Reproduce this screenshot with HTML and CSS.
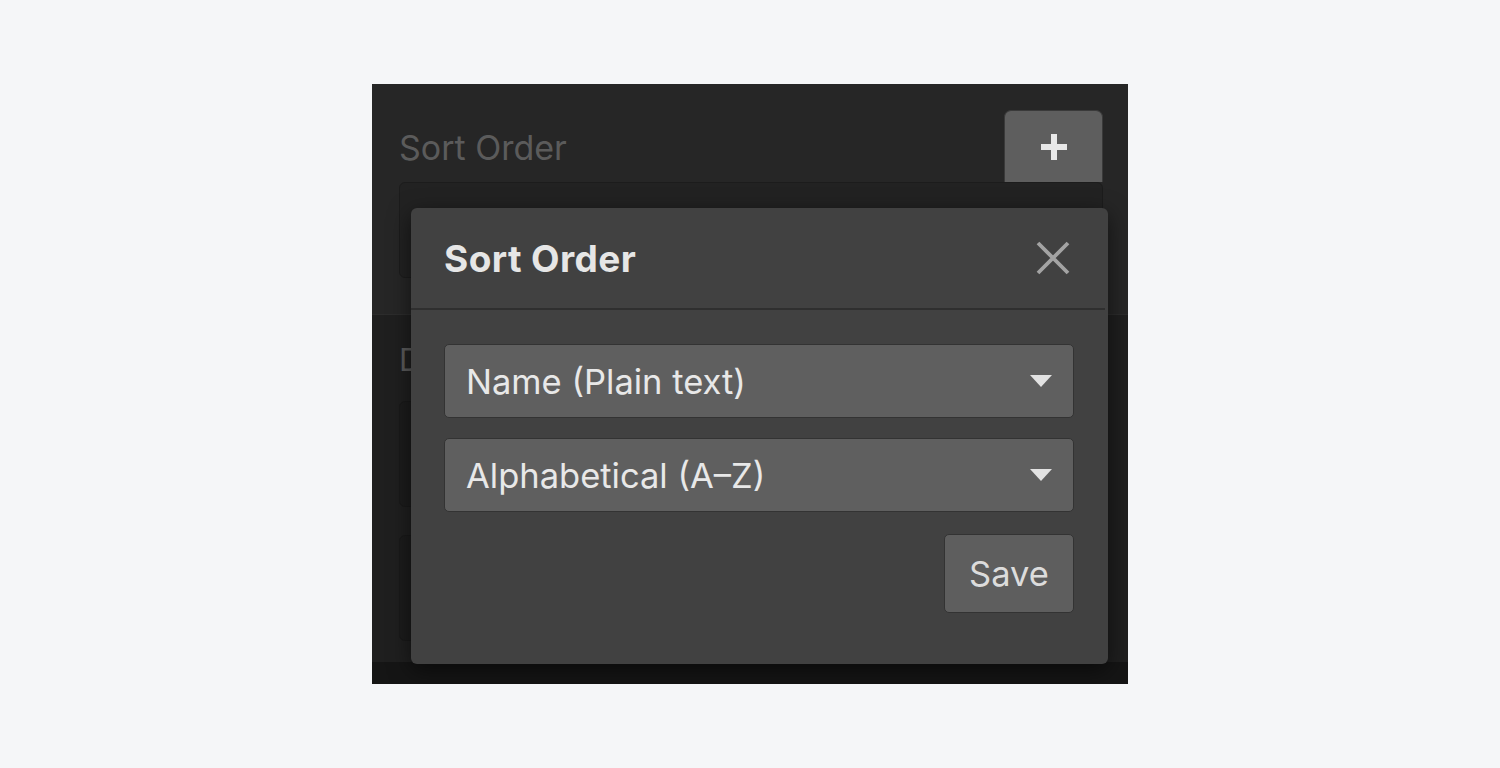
FILE: index.html
```html
<!DOCTYPE html>
<html>
<head>
<meta charset="utf-8">
<link rel="stylesheet" href="styles.css">
</head>
<body>
<div class="panel">
  <div class="panel-top">
    <div class="bg-header">
      <span class="bg-label">Sort Order</span>
      <div class="add-btn">
        <svg width="28" height="28" viewBox="0 0 28 28"><path d="M14 1v26M1 14h26" stroke="#e8e8e8" stroke-width="6"/></svg>
      </div>
    </div>
    <div class="bg-list"></div>
  </div>
  <div class="panel-mid">
    <span class="bg-label small">D</span>
    <div class="bg-box"></div>
    <div class="bg-box"></div>
  </div>
  <div class="panel-foot"></div>

  <div class="modal">
    <div class="modal-head">
      <h2 class="modal-title">Sort Order</h2>
      <svg class="close" width="34" height="34" viewBox="0 0 34 34"><path d="M2 2L32 32M32 2L2 32" stroke="#a3a3a3" stroke-width="3.8"/></svg>
    </div>
    <div class="modal-body">
      <div class="select"><span>Name (Plain text)</span><svg width="24" height="14" viewBox="0 0 24 14"><path d="M1 1h22L12 13z" fill="#e2e2e2"/></svg></div>
      <div class="select"><span>Alphabetical (A–Z)</span><svg width="24" height="14" viewBox="0 0 24 14"><path d="M1 1h22L12 13z" fill="#e2e2e2"/></svg></div>
      <div class="actions"><button class="save">Save</button></div>
    </div>
  </div>
</div>
</body>
</html>
```
FILE: styles.css
```css
* { box-sizing: border-box; }
html, body { margin: 0; height: 100%; }
body {
  background: #f5f6f8;
  display: flex;
  align-items: center;
  justify-content: center;
  font-family: Inter, "Liberation Sans", sans-serif;
}
.panel {
  position: relative;
  width: 756px;
  height: 600px;
  background: #1f1f1f;
  display: flex;
  flex-direction: column;
  overflow: hidden;
}
.panel-top {
  background: #262626;
  height: 231px;
  padding: 26px 25px 0 27px;
  border-bottom: 1px solid #2c2c2c;
}
.bg-header {
  display: flex;
  justify-content: space-between;
  align-items: center;
  height: 72px;
}
.bg-label {
  color: #5b5b5b;
  font-size: 34px;
  line-height: 40px;
  margin-top: 3px;
}
.add-btn {
  width: 99px;
  height: 72px;
  background: #5e5e5e;
  border-radius: 7px 7px 0 0;
  border: 1px solid #3a3a3a;
  border-bottom: none;
  display: flex;
  align-items: center;
  justify-content: center;
}
.bg-list {
  height: 96px;
  background: #222;
  border-radius: 6px;
  border: 1px solid #1c1c1c;
}
.panel-mid {
  flex: 1;
  padding: 30px 25px 0 27px;
  display: flex;
  flex-direction: column;
  gap: 28px;
}
.bg-label.small { font-size: 31px; line-height: 30px; margin-top: 0; margin-bottom: -2px; }
.bg-box {
  height: 106px;
  background: #1c1c1c;
  border-radius: 6px;
  border: 1px solid #191919;
}
.panel-foot {
  height: 22px;
  background: #151515;
}
.modal {
  position: absolute;
  left: 39px;
  top: 124px;
  width: 697px;
  height: 456px;
  background: #414141;
  border-radius: 6px;
  box-shadow: 0 6px 22px rgba(0,0,0,0.55);
}
.modal-head {
  height: 102px;
  display: flex;
  align-items: center;
  justify-content: space-between;
  padding: 0 35px 0 33px;
  border-bottom: 2px solid #2f2f2f;
  margin-right: 3px;
}
.modal-title {
  margin: 0;
  color: #e6e6e6;
  font-size: 37px;
  font-weight: 700;
  letter-spacing: 0.4px;
}
.modal-body {
  padding: 34px 34px 0 33px;
  display: flex;
  flex-direction: column;
  gap: 20px;
}
.select {
  height: 74px;
  background: #5f5f5f;
  border: 1px solid #333;
  border-radius: 5px;
  display: flex;
  align-items: center;
  justify-content: space-between;
  padding: 0 20px 0 21px;
  color: #e8e8e8;
  font-size: 34.5px;
}
.actions {
  display: flex;
  justify-content: flex-end;
  margin-top: 2px;
}
.save {
  width: 130px;
  height: 79px;
  background: #5e5e5e;
  border: 1px solid #333;
  border-radius: 5px;
  color: #dcdcdc;
  font-family: inherit;
  font-size: 34.5px;
  padding: 0;
}
```
